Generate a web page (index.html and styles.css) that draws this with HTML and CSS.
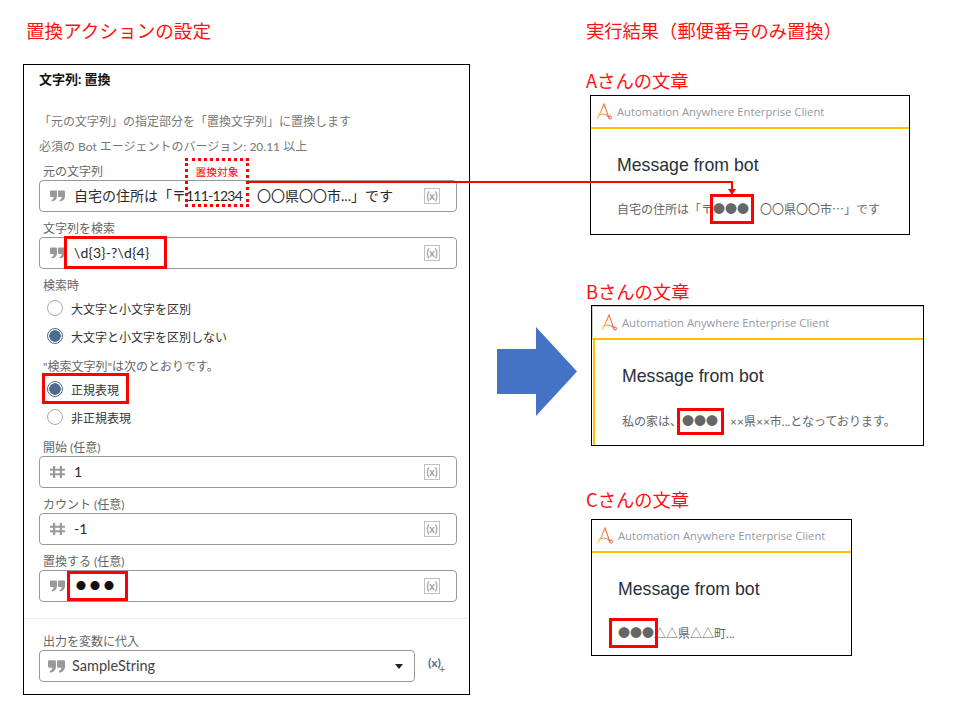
FILE: index.html
```html
<!DOCTYPE html>
<html lang="ja">
<head>
<meta charset="utf-8">
<title>置換アクションの設定</title>
<link rel="stylesheet" href="styles.css">
</head>
<body>
<svg class="defs" width="0" height="0" aria-hidden="true">
  <defs>
    <symbol id="q" viewBox="0 0 15 11"><path d="M1 0h5a1 1 0 0 1 1 1v4.500C7 8.500 5 10.500 2 11L1.500 9.500C3 9 3.700 8 3.800 6.500H1a1 1 0 0 1-1-1V1a1 1 0 0 1 1-1zM9 0h5a1 1 0 0 1 1 1v4.500c0 3-2 5-5 5.500L9.500 9.500C11 9 11.700 8 11.800 6.500H9a1 1 0 0 1-1-1V1a1 1 0 0 1 1-1z"/></symbol>
    <symbol id="h" viewBox="0 0 15 13" preserveAspectRatio="none"><path d="M3 0h2.200v3h4.600V0H12v3h3v2.200h-3v2.600h3V10h-3v3H9.800v-3H5.200v3H3v-3H0V7.800h3V5.200H0V3h3zM5.200 5.200v2.600h4.600V5.200z"/></symbol>
    <symbol id="v" viewBox="0 0 16 16"><rect x=".5" y=".5" width="15" height="15" fill="#fff" stroke="#bcc2c2"/><text x="8" y="11.500" text-anchor="middle" font-size="10.500" font-weight="700" fill="#a0a0a0" font-family="Lato">(x)</text></symbol>
    <linearGradient id="lg" x1="0" y1="1" x2="1" y2="0.6"><stop offset="0" stop-color="#ffc84a"/><stop offset="1" stop-color="#e8603c"/></linearGradient>
    <symbol id="logo" viewBox="0 0 17 17"><path d="M1 16C4 11 6.500 5 8 1c1.500 4 3 9 4.500 12.500M2 13c3-2.500 7-3 11.500 1.500" fill="none" stroke="url(#lg)" stroke-width="1.100"/><circle cx="14" cy="14.500" r="1.500" fill="none" stroke="#e8603c"/></symbol>
  </defs>
</svg>
<div class="stage">
  <section class="left">
    <h1 class="heading">置換アクションの設定</h1>
    <div class="panel">
      <h2 class="panel-title">文字列: 置換</h2>
      <p class="desc first">「元の文字列」の指定部分を「置換文字列」に置換します</p>
      <p class="desc">必須の Bot エージェントのバージョン: 20.11 以上</p>
      <div class="field field-first">
        <div class="label">元の文字列</div>
        <div class="input"><svg class="ico"><use href="#q"/></svg><span class="val">自宅の住所は「〒<span class="tight">111-1234</span><span class="gap"></span>〇〇県〇〇市...」です</span><svg class="var"><use href="#v"/></svg></div>
      </div>
      <div class="field">
        <div class="label">文字列を検索</div>
        <div class="input"><svg class="ico"><use href="#q"/></svg><span class="val wide">\d{3}-?\d{4}</span><svg class="var"><use href="#v"/></svg></div>
      </div>
      <div class="label group-label">検索時</div>
      <div class="radio"><span class="dot"></span>大文字と小文字を区別</div>
      <div class="radio"><span class="dot on"></span>大文字と小文字を区別しない</div>
      <div class="label group-label second">"検索文字列"は次のとおりです。</div>
      <div class="radio"><span class="dot on"></span>正規表現</div>
      <div class="radio"><span class="dot"></span>非正規表現</div>
      <div class="field">
        <div class="label">開始 (任意)</div>
        <div class="input"><svg class="ico"><use href="#h"/></svg><span class="val">1</span><svg class="var"><use href="#v"/></svg></div>
      </div>
      <div class="field">
        <div class="label">カウント (任意)</div>
        <div class="input"><svg class="ico"><use href="#h"/></svg><span class="val">-1</span><svg class="var"><use href="#v"/></svg></div>
      </div>
      <div class="field">
        <div class="label">置換する (任意)</div>
        <div class="input"><svg class="ico"><use href="#q"/></svg><span class="val dots">●●●</span><svg class="var"><use href="#v"/></svg></div>
      </div>
      <hr class="rule">
      <div class="field field-output">
        <div class="label">出力を変数に代入</div>
        <div class="output-row">
          <div class="input select"><svg class="ico ico-lg"><use href="#q"/></svg><span class="val latin">SampleString</span><span class="caret"></span></div>
          <span class="addvar">(x)<i>+</i></span>
        </div>
      </div>
    </div>
  </section>

  <svg class="big-arrow" viewBox="0 0 80 89" width="80" height="89"><path d="M0 22h39V0l41 44.500L39 89V67H0z" fill="#4472c4"/></svg>

  <section class="right">
    <h1 class="heading">実行結果（郵便番号のみ置換）</h1>

    <h2 class="heading person a">Aさんの文章</h2>
    <div class="win win-a">
      <div class="win-head"><svg class="logo"><use href="#logo"/></svg>Automation Anywhere Enterprise Client</div>
      <div class="win-body">
        <div class="win-title">Message from bot</div>
        <div class="win-msg">自宅の住所は「〒<span class="cjk">●●●</span><span class="sp"></span>〇〇県〇〇市<span class="cjk">…</span>」です</div>
      </div>
    </div>

    <h2 class="heading person b">Bさんの文章</h2>
    <div class="win win-b">
      <div class="win-head"><svg class="logo"><use href="#logo"/></svg>Automation Anywhere Enterprise Client</div>
      <div class="win-body">
        <div class="win-title">Message from bot</div>
        <div class="win-msg">私の家は、<span class="cjk">●●●</span><span class="sp sp-b"></span>××県××市...となっております。</div>
      </div>
    </div>

    <h2 class="heading person c">Cさんの文章</h2>
    <div class="win win-c">
      <div class="win-head"><svg class="logo"><use href="#logo"/></svg>Automation Anywhere Enterprise Client</div>
      <div class="win-body">
        <div class="win-title">Message from bot</div>
        <div class="win-msg"><span class="cjk">●●●</span><span class="cjk">△△</span>県<span class="cjk">△△</span>町...</div>
      </div>
    </div>
  </section>

  <div class="callout dotted"><span>置換対象</span></div>
  <svg class="connector" width="490" height="16" viewBox="0 0 490 16"><path d="M0 1h484v8" fill="none" stroke="#f00" stroke-width="2"/><path d="M480 8h8l-4 6z" fill="#f00"/></svg>
  <div class="box box-search"></div>
  <div class="box box-regex"></div>
  <div class="box box-replace"></div>
  <div class="box box-a"></div>
  <div class="box box-b"></div>
  <div class="box box-c"></div>
</div>
</body>
</html>
```
FILE: styles.css
```css
* { box-sizing: border-box; }
html, body { margin: 0; padding: 0; background: #fff; }
body { font-family: Lato, "Noto Sans CJK JP", sans-serif; color: #222; }
.defs { position: absolute; }
.stage { position: relative; width: 958px; height: 724px; display: flex; overflow: hidden; }

.left { width: 447px; margin-left: 23px; padding-top: 18px; flex: none; }
.right { margin-left: 9px; padding-top: 18px; flex: none; width: 372px; }
.big-arrow { flex: none; margin: 327px 0 0 27px; }

.heading { margin: 0; font: 400 18.300px/24px "Noto Sans CJK JP", sans-serif; color: #f11; height: 24px; white-space: nowrap; }
.left .heading { margin-left: 3px; font-size: 18.600px; }

.panel { margin-top: 22px; border: 1px solid #000; padding: 0 12px 12px 15px; width: 447px; position: relative; }
.panel-title { margin: 0; font: 700 13px/29px Lato, "Noto Sans CJK JP", sans-serif; color: #111; height: 28px; }
.desc { margin: 0; font-size: 12px; line-height: 24px; height: 25px; color: #777; white-space: nowrap; }
.desc.first { margin-top: 17px; }

.field { margin-top: 6px; }
.field-first { margin-top: 1px; }
.label { font-size: 12px; line-height: 21px; height: 19px; color: #666; padding-left: 4px; white-space: nowrap; }
.input { height: 32px; width: 418px; border: 1px solid #999; border-radius: 4px; display: flex; align-items: center; padding: 0 16px 0 10px; background: #fff; }
.ico { width: 15px; height: 12px; fill: #999; flex: none; margin-right: 9px; }
.val { font-size: 14px; line-height: 20px; color: #2a2a2a; white-space: nowrap; flex: 1; }
.val.wide { letter-spacing: .2px; }
.val.dots { font-family: "Noto Sans CJK JP", sans-serif; font-size: 10px; letter-spacing: 4px; color: #111; padding-left: 2px; }
.tight { letter-spacing: -.75px; }
.gap { display: inline-block; width: 15px; }
.var { width: 16px; height: 16px; flex: none; }

.group-label { margin-top: 6px; }
.radio { height: 28px; display: flex; align-items: center; font-size: 12px; color: #333; padding-left: 8px; white-space: nowrap; }
.dot { width: 16px; height: 16px; border-radius: 50%; border: 1px solid #aaa; background: #fff; margin-right: 8px; flex: none; }
.dot.on { border-color: #4f6b8f; background: radial-gradient(circle, #4f6b8f 0 5.500px, #fff 6px); }

.rule { border: 0; border-top: 1px solid #eee; margin: 16px -12px 0 -15px; height: 0; }
.field-output { margin-top: 12px; }
.output-row { display: flex; align-items: center; }
.select { width: 376px; padding: 0 10px 0 8px; }
.ico-lg { width: 17px; height: 13px; margin-right: 7px; }
.latin { font-family: Lato, sans-serif; font-size: 14.500px; color: #444; }
.caret { width: 0; height: 0; border: 4px solid transparent; border-top: 5px solid #222; border-bottom: 0; margin-right: 1px; }
.addvar { margin-left: 13px; font: 700 12px/12px Lato, sans-serif; color: #56698a; position: relative; top: -3px; }
.addvar i { position: absolute; left: 11px; top: 6px; font-style: normal; font-weight: 400; font-size: 11px; color: #777; }

.person.a { margin-top: 26px; }
.person.b { margin-top: 44px; }
.person.c { margin-top: 41px; }

.win { border: 1px solid #000; background: #fff; }
.win-a { margin: 3px 0 0 4px; width: 320px; height: 140px; }
.win-b { margin: 2px 0 0 5px; width: 333px; height: 141px; }
.win-c { margin: 8px 0 0 5px; width: 261px; height: 137px; }
.win-head { display: flex; align-items: center; font: 400 11.250px/16px "Open Sans", sans-serif; color: #959aa3; border-bottom: 2px solid #ffc000; height: 33px; padding-left: 5px; white-space: nowrap; }
.logo { width: 17px; height: 17px; margin-right: 4px; flex: none; }
.win-body { padding: 24px 0 0 26px; }
.win-title { font: 400 17.700px/24px "Liberation Sans", sans-serif; color: #2b2f38; }
.win-msg { margin-top: 20px; font-size: 12px; line-height: 24px; color: #666; white-space: nowrap; }
.cjk { font-family: "Noto Sans CJK JP", sans-serif; }
.sp { display: inline-block; width: 11px; }
.sp-b { width: 12px; }

.win-b .win-head { height: 34px; padding-left: 8px; border-top: 1px solid #ccc; border-left: 1px solid #ccc; }
.win-b .win-body { border-left: 2px solid #ffc000; margin-left: 1px; padding-left: 27px; height: 105px; }
.win-b .win-msg { margin-top: 21px; }

.callout { position: absolute; left: 185px; top: 158px; width: 64px; height: 49px; }
.dotted { border: 3px dotted #f00; }
.dotted span { display: block; text-align: center; font: 400 10.700px/14px "Noto Sans CJK JP", sans-serif; color: #f00; margin-top: 4px; white-space: nowrap; }
.connector { position: absolute; left: 248px; top: 181px; }
.box { position: absolute; border: 3px solid #f00; }
.box-search { left: 64px; top: 236px; width: 103px; height: 33px; }
.box-regex { left: 42px; top: 373px; width: 87px; height: 31px; }
.box-replace { left: 67px; top: 571px; width: 61px; height: 30px; }
.box-a { left: 710px; top: 194px; width: 44px; height: 30px; }
.box-b { left: 677px; top: 408px; width: 47px; height: 27px; }
.box-c { left: 609px; top: 618px; width: 49px; height: 30px; }
```
